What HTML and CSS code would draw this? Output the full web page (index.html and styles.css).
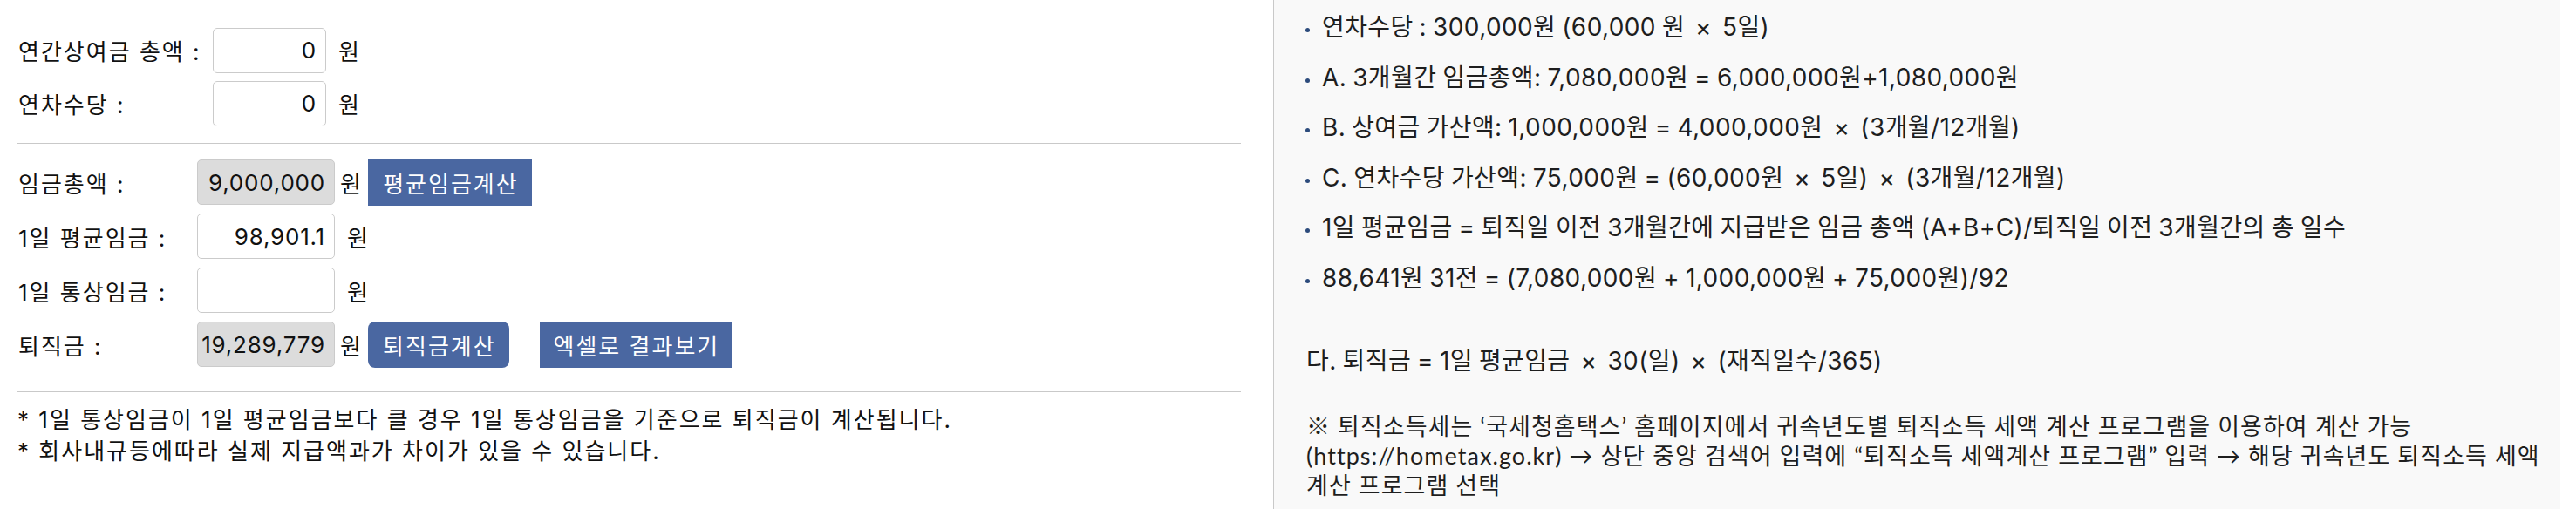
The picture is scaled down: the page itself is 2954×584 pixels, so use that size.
FILE: index.html
```html
<!DOCTYPE html>
<html lang="ko">
<head>
<meta charset="utf-8">
<title>퇴직금 계산기</title>
<link rel="stylesheet" href="styles.css">
</head>
<body>
<div class="page">
  <section class="calc">
    <div class="fields fields-top">
      <label class="lbl">연간상여금 총액 :</label>
      <div class="val"><input class="num" type="text" value="0"><span class="unit">원</span></div>
      <label class="lbl">연차수당 :</label>
      <div class="val"><input class="num" type="text" value="0"><span class="unit">원</span></div>
    </div>
    <hr class="rule">
    <div class="fields fields-result">
      <label class="lbl">임금총액 :</label>
      <div class="val"><input class="num num-wide ro" type="text" readonly value="9,000,000"><span class="unit unit-tight">원</span><button class="btn btn-avg" type="button">평균임금계산</button></div>
      <label class="lbl">1일 평균임금 :</label>
      <div class="val"><input class="num num-wide" type="text" value="98,901.1"><span class="unit">원</span></div>
      <label class="lbl">1일 통상임금 :</label>
      <div class="val"><input class="num num-wide" type="text" value=""><span class="unit">원</span></div>
      <label class="lbl">퇴직금 :</label>
      <div class="val"><input class="num num-wide ro" type="text" readonly value="19,289,779"><span class="unit unit-tight">원</span><button class="btn btn-round" type="button">퇴직금계산</button><button class="btn btn-excel" type="button">엑셀로 결과보기</button></div>
    </div>
    <hr class="rule rule-bottom">
    <p class="note">* 1일 통상임금이 1일 평균임금보다 클 경우 1일 통상임금을 기준으로 퇴직금이 계산됩니다.</p>
    <p class="note">* 회사내규등에따라 실제 지급액과가 차이가 있을 수 있습니다.</p>
  </section>
  <aside class="info">
    <ul class="steps">
      <li>연차수당 : 300,000원 (60,000 원 <span class="mul">×</span> 5일)</li>
      <li>A. 3개월간 임금총액: 7,080,000원 = 6,000,000원+1,080,000원</li>
      <li>B. 상여금 가산액: 1,000,000원 = 4,000,000원 <span class="mul">×</span> (3개월/12개월)</li>
      <li>C. 연차수당 가산액: 75,000원 = (60,000원 <span class="mul">×</span> 5일) <span class="mul">×</span> (3개월/12개월)</li>
      <li>1일 평균임금 = 퇴직일 이전 3개월간에 지급받은 임금 총액 (A+B+C)/퇴직일 이전 3개월간의 총 일수</li>
      <li>88,641원 31전 = (7,080,000원 + 1,000,000원 + 75,000원)/92</li>
    </ul>
    <p class="formula">다. 퇴직금 = 1일 평균임금 <span class="mul">×</span> 30(일) <span class="mul">×</span> (재직일수/365)</p>
    <p class="tax">※ 퇴직소득세는 ‘국세청홈택스’ 홈페이지에서 귀속년도별 퇴직소득 세액 계산 프로그램을 이용하여 계산 가능 (https://hometax.go.kr) → 상단 중앙 검색어 입력에 “퇴직소득 세액계산 프로그램” 입력 → 해당 귀속년도 퇴직소득 세액 계산 프로그램 선택</p>
  </aside>
</div>
</body>
</html>
```

FILE: styles.css
```css
body {
  margin: 0;
  background: #fff;
}

.page {
  display: flex;
  width: 2936px;
  height: 584px;
}

/* left: calculator form */
.calc {
  width: 1460px;
  flex: none;
  box-sizing: border-box;
  padding: 27px 37px 0 20px;
  font-family: Inter, "Noto Sans CJK KR", sans-serif;
  font-size: 26px;
  letter-spacing: 2px;
  color: #111;
}

.fields {
  display: grid;
  align-items: center;
}

.fields-top {
  grid-template-columns: 224px auto;
  grid-auto-rows: 61px;
}

.fields-result {
  grid-template-columns: 206px auto;
  grid-auto-rows: 62px;
  margin-top: 13px;
}

.lbl {
  padding-left: 1px;
  white-space: nowrap;
}

.val {
  display: flex;
  align-items: center;
}

.num {
  box-sizing: border-box;
  width: 130px;
  height: 52px;
  margin: 0;
  border: 1px solid #cbcbcb;
  border-radius: 5px;
  padding: 0 10px 0 2px;
  background: #fff;
  color: #111;
  font-family: Inter, "Noto Sans CJK KR", sans-serif;
  font-size: 26px;
  letter-spacing: 0.8px;
  text-align: right;
  outline: none;
}

.num-wide {
  width: 158px;
}

.ro {
  background: #dcdcdc;
}

.unit {
  margin-left: 14px;
}

.unit-tight {
  margin-left: 6px;
}

.btn {
  box-sizing: border-box;
  height: 53px;
  margin: 0 0 0 6px;
  border: 0;
  padding: 0 0 0 2px;
  background: #4a67a1;
  color: #fff;
  font-family: Inter, "Noto Sans CJK KR", sans-serif;
  font-size: 26px;
  letter-spacing: 2px;
  text-align: center;
  white-space: nowrap;
}

.btn-avg {
  width: 188px;
}

.btn-round {
  width: 162px;
  border-radius: 8px;
}

.btn-excel {
  width: 220px;
  margin-left: 35px;
}

.rule {
  height: 0;
  margin: 15px 0 0;
  border: 0;
  border-top: 1px solid #c9c9c9;
}

.rule-bottom {
  margin-top: 23px;
}

.note {
  margin: 0;
  line-height: 36px;
}

.rule-bottom + .note {
  margin-top: 14px;
}

/* right: explanation panel */
.info {
  flex: 1;
  box-sizing: border-box;
  border-left: 1px solid #c9c9c9;
  background: #f9f9f9;
  padding: 14px 18px 0 37px;
  font-family: Inter, "Noto Sans CJK KR", sans-serif;
  font-size: 28px;
  letter-spacing: 0.4px;
  word-spacing: -1.3px;
  color: #1e1e1e;
  word-break: keep-all;
}

.mul {
  padding: 0 5px;
}

.steps {
  list-style: none;
  margin: 0;
  padding: 0;
}

.steps li {
  position: relative;
  padding-left: 18px;
  line-height: 34px;
  margin-bottom: 23.5px;
}

.steps li:last-child {
  margin-bottom: 0;
}

.steps li::before {
  content: "";
  position: absolute;
  left: -1px;
  top: 18px;
  width: 5px;
  height: 5px;
  border-radius: 50%;
  background: #2c4b7c;
}

.formula {
  margin: 61px 0 0;
  line-height: 34px;
}

.tax {
  margin: 41px 0 0;
  font-family: Lato, "Noto Sans CJK KR", sans-serif;
  font-size: 27px;
  letter-spacing: 1.05px;
  word-spacing: 0;
  line-height: 34px;
}
```
